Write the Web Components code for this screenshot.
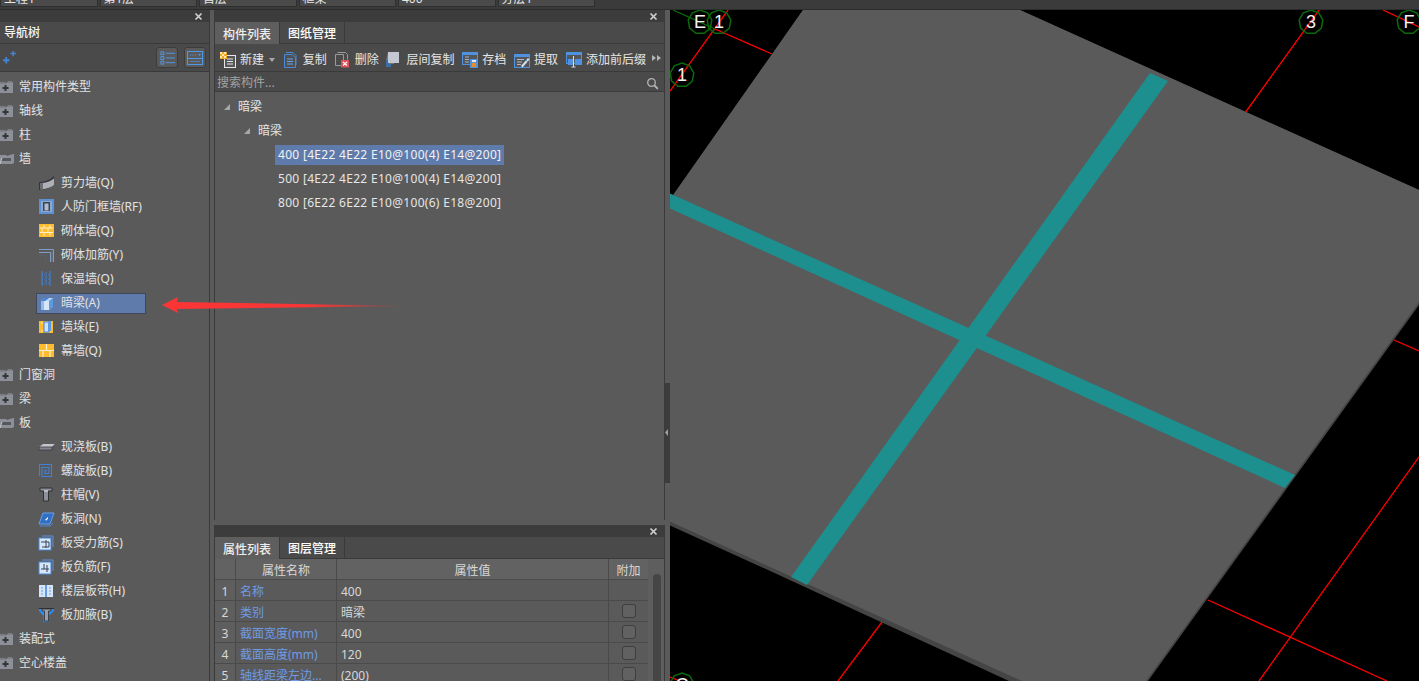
<!DOCTYPE html>
<html lang="zh">
<head>
<meta charset="utf-8">
<title>导航树</title>
<style>
    html, body { margin: 0; height: 100%; overflow: hidden; background: #3c3c3c; }
    body {
        font: 12px/16px "Noto Sans", "Noto Sans CJK SC", sans-serif;
        color: #e2e2e2;
    }
</style>
</head>
<body>
<app-shell>
    <top-strip slot="top">
        <strip-field>工程1</strip-field>
        <strip-field>第1层</strip-field>
        <strip-field>首层</strip-field>
        <strip-field>框架</strip-field>
        <strip-field>400</strip-field>
        <strip-field>分层1</strip-field>
    </top-strip>

    <dock-panel slot="nav">
        <nav-header>导航树</nav-header>
        <nav-tools></nav-tools>
        <nav-tree>
            <tree-node icon="folderPlus">常用构件类型</tree-node>
            <tree-node icon="folderPlus">轴线</tree-node>
            <tree-node icon="folderPlus">柱</tree-node>
            <tree-node icon="folderOpen">墙</tree-node>
            <tree-node child icon="shear">剪力墙(Q)</tree-node>
            <tree-node child icon="frame">人防门框墙(RF)</tree-node>
            <tree-node child icon="brick">砌体墙(Q)</tree-node>
            <tree-node child icon="brickBar">砌体加筋(Y)</tree-node>
            <tree-node child icon="insul">保温墙(Q)</tree-node>
            <tree-node child selected icon="beam">暗梁(A)</tree-node>
            <tree-node child icon="pier">墙垛(E)</tree-node>
            <tree-node child icon="curtain">幕墙(Q)</tree-node>
            <tree-node icon="folderPlus">门窗洞</tree-node>
            <tree-node icon="folderPlus">梁</tree-node>
            <tree-node icon="folderOpen">板</tree-node>
            <tree-node child icon="slab">现浇板(B)</tree-node>
            <tree-node child icon="spiral">螺旋板(B)</tree-node>
            <tree-node child icon="cap">柱帽(V)</tree-node>
            <tree-node child icon="hole">板洞(N)</tree-node>
            <tree-node child icon="rebarA">板受力筋(S)</tree-node>
            <tree-node child icon="rebarB">板负筋(F)</tree-node>
            <tree-node child icon="strip">楼层板带(H)</tree-node>
            <tree-node child icon="haunch">板加腋(B)</tree-node>
            <tree-node icon="folderPlus">装配式</tree-node>
            <tree-node icon="folderPlus">空心楼盖</tree-node>
        </nav-tree>
    </dock-panel>

    <dock-panel slot="list">
        <panel-tabs>
            <panel-tab active>构件列表</panel-tab>
            <panel-tab>图纸管理</panel-tab>
        </panel-tabs>
        <comp-toolbar>
            <tool-button icon="new" caret>新建</tool-button>
            <tool-button icon="copy">复制</tool-button>
            <tool-button icon="del">删除</tool-button>
            <tool-button icon="floorCopy">层间复制</tool-button>
            <tool-button icon="save">存档</tool-button>
            <tool-button icon="pick">提取</tool-button>
            <tool-button icon="affix">添加前后缀</tool-button>
        </comp-toolbar>
        <search-row>搜索构件...</search-row>
        <comp-tree>
            <comp-node level="0">暗梁</comp-node>
            <comp-node level="1">暗梁</comp-node>
            <comp-node level="2" selected>400 [4E22 4E22 E10@100(4) E14@200]</comp-node>
            <comp-node level="2">500 [4E22 4E22 E10@100(4) E14@200]</comp-node>
            <comp-node level="2">800 [6E22 6E22 E10@100(6) E18@200]</comp-node>
        </comp-tree>
    </dock-panel>

    <dock-panel slot="props">
        <panel-tabs>
            <panel-tab active>属性列表</panel-tab>
            <panel-tab>图层管理</panel-tab>
        </panel-tabs>
        <prop-table>
            <prop-row n="1" name="名称" value="400" nocheck></prop-row>
            <prop-row n="2" name="类别" value="暗梁"></prop-row>
            <prop-row n="3" name="截面宽度(mm)" value="400"></prop-row>
            <prop-row n="4" name="截面高度(mm)" value="120"></prop-row>
            <prop-row n="5" name="轴线距梁左边..." value="(200)"></prop-row>
        </prop-table>
    </dock-panel>

    <split-handle slot="split"></split-handle>
    <cad-view slot="cad"></cad-view>
    <red-arrow slot="over"></red-arrow>
</app-shell>

<script>
const ICONS = {
    folderPlus: '<path d="M0 3h5l1 1h1l1-2h4v1h1v11H0z" fill="#8d9099"/><path d="M0 4h6M8 3h4" stroke="#6c6e75"/><path d="M2.500 8h2V6h2v2h2v2h-2v2h-2v-2h-2z" fill="#33353a"/>',
    folderOpen: '<path d="M0 4h6l1 1 6-2h1v9l-2 1H0z" fill="#8d9099"/><path d="M2 7h9v3H1z" fill="#55575c"/><path d="M0 13l2-6" stroke="#c2c4c8"/>',
    shear: '<path d="M0 7c6 0 11-2 15-6v9c-4 3-9 5-15 5z" fill="#33353a"/><path d="M2 8c5 0 10-2 13-4.500V10c-3 2.500-8 4-13 4.500z" fill="#aeb0b6"/><path d="M1 14.500V8h3v6z" fill="#6c6e75"/>',
    frame: '<rect x="0" y="0" width="15" height="15" fill="#5d91d6"/><rect x="2" y="2" width="11" height="11" fill="#8ea8cc"/><rect x="4" y="3" width="7" height="9" fill="#3d4650"/><rect x="5.500" y="4.500" width="4" height="7" fill="#aebbd0"/>',
    brick: '<rect x="0" y="1" width="15" height="13" fill="#fdbb2d"/><path d="M1 5h13M1 9.500h13M5 2v3M11 2v3M3 5v4.500M9 5v4.500M5 9.500V13M11 9.500V13" stroke="#fff0c8"/>',
    brickBar: '<path d="M0 2.500h14.500V15M0 5.500h11.500V15" fill="none" stroke="#7f9dc6"/><path d="M0 8.500h6.500V13" fill="none" stroke="#56606e"/><path d="M13 4v11" stroke="#6c7a8d"/>',
    insul: '<path d="M3 0v15M11 0v15" stroke="#3f80d8" stroke-width="1.200"/><path d="M7 1v13" stroke="#3f80d8" stroke-dasharray="2 2"/><path d="M3 4h8M3 8h8M3 12h8" stroke="#3f80d8" stroke-dasharray="1 1"/>',
    beam: '<path d="M2 6l4-3h8v8l-4 4H2z" fill="#b8d4f2"/><path d="M2 6h8v9H2z" fill="#d6e6f8"/><path d="M10 6l4-3v8l-4 4z" fill="#5b9ae0"/><path d="M2 6l4-3h4L6 6z" fill="#3f80d8"/><path d="M2 6h3v9H2z" fill="#8fbcec"/>',
    pier: '<rect x="0" y="2" width="14" height="12" fill="#fdbb2d"/><path d="M2 4h10M2 12h10" stroke="#fff0c8" stroke-dasharray="2 1"/><rect x="5" y="3" width="5" height="10" fill="#cfe1f6" stroke="#3f80d8"/><rect x="9" y="2" width="3" height="10" fill="#5b9ae0"/>',
    curtain: '<rect x="0" y="1" width="15" height="13" fill="#fdbb2d"/><path d="M7.500 1v6.500M0 7.500h15M4 7.500V14M11 7.500V14" stroke="#fff0c8" stroke-width="1.200"/>',
    slab: '<path d="M0 8l4-3h12l-3 3z" fill="#c4c6cb"/><path d="M0 8h13v3H0z" fill="#85878e"/><path d="M13 8l3-3v3l-3 3z" fill="#55575c"/><path d="M0 8h13v3H0z" fill="none" stroke="#3a3b40" stroke-width=".8"/>',
    spiral: '<path d="M.5 13V1.500h12v12H3V4.500h7v6H6V7.500h2" fill="none" stroke="#3f80d8" stroke-width="1.100"/>',
    cap: '<path d="M1 1h12v3H9.500v10H4.500V4H1z" fill="#8d9099" stroke="#2f3034"/><path d="M5 4h4" stroke="#e5e5e5"/>',
    hole: '<path d="M4 2h11l-4 11H0z" fill="#2f6fc6" stroke="#6aa0e4"/><path d="M6 9l3-3v1.500L7.500 9.500z" fill="#fff"/><path d="M1 15h10l3-3" fill="none" stroke="#4a88d8"/>',
    rebarA: '<path d="M3 1h11v11" fill="none" stroke="#5b92d8"/><rect x="0" y="3" width="12" height="12" fill="#d8e6f7" stroke="#4a88d8"/><path d="M2 7h8v5H3M7 5v8" fill="none" stroke="#33435a"/>',
    rebarB: '<path d="M3 1h11v11" fill="none" stroke="#5b92d8"/><rect x="0" y="3" width="12" height="12" fill="#d8e6f7" stroke="#4a88d8"/><path d="M5 5v5H2M8 6v7M5 10h5" fill="none" stroke="#33435a"/>',
    strip: '<rect x="0" y="2" width="14" height="12" fill="#d6e6f8"/><path d="M7 2v12" stroke="#3f80d8" stroke-width="1.500"/><path d="M3 4v8M11 4v8" stroke="#6f9ed8" stroke-dasharray="2 1"/>',
    haunch: '<path d="M0 1h15v1H0z" fill="#2f3034"/><path d="M0 2h15v2L9.500 9V15h-5V9L0 4z" fill="#2e8df0"/><path d="M3 2h9v2H9.500v10h-4V4H3z" fill="#9a9da5" stroke="#2f3034" stroke-width=".8"/>',
    new: '<rect x="4.500" y="3.500" width="11" height="12" fill="#55565a" stroke="#e6e6e6"/><path d="M7 7h6M7 9.500h6M7 12h6" stroke="#e6e6e6"/><rect x="0" y="0" width="7" height="7" fill="#f5a623"/><path d="M0 0h2v2H0zM4 0h2v2H4zM2 2h2v2H2zM0 4h2v2H0zM4 4h2v2H4z" fill="#fde7b8"/>',
    copy: '<path d="M3 .5h7l3 3V13" fill="none" stroke="#4a88d8"/><path d="M1.500 2.500h8l3 3v10h-11z" fill="#4f5052" stroke="#4a88d8"/><path d="M4 7h6M4 9.500h6M4 12h6" stroke="#6ba3e8"/>',
    del: '<path d="M2.500 .5h8l2 2v5" fill="none" stroke="#9a9a9a"/><path d="M.5 2.500h8v11h-8z" fill="none" stroke="#9a9a9a"/><rect x="6" y="8" width="8" height="7.500" fill="#e0525a"/><path d="M8 10l4 3.500M12 10l-4 3.500" stroke="#fff" stroke-width="1.100"/>',
    floorCopy: '<path d="M0 8h5v7H0z" fill="#3a6ea8"/><rect x="2" y="0" width="11" height="11" fill="#c4c8d2"/><path d="M2 0l-2 8h2z" fill="#74787f"/><rect x="3" y="11" width="5" height="1" fill="#777"/>',
    save: '<rect x=".5" y=".5" width="15" height="12" fill="#55565a" stroke="#4f93e0"/><rect x="0" y="0" width="16" height="3" fill="#4f93e0"/><path d="M3 5h4M3 7.500h4M3 10h4" stroke="#9fb4cf"/><rect x="8" y="7" width="8" height="9" fill="#4f93e0"/><rect x="10" y="11" width="4" height="4" fill="#f28b1e"/><rect x="10" y="8" width="4" height="2" fill="#dfe9f5"/>',
    pick: '<rect x=".5" y="2.500" width="15" height="13" fill="#55565a" stroke="#4f93e0"/><rect x="0" y="2" width="16" height="3" fill="#4f93e0"/><path d="M3 7.500h7M3 10h5M3 12.500h4" stroke="#b6b8bc"/><path d="M7 14l7-8 1.500 1.500-7 8z" fill="#d8e2ec"/><path d="M12 8l2 2" stroke="#33a8c9"/>',
    affix: '<rect x=".5" y=".5" width="15" height="11" fill="#55565a" stroke="#4f93e0"/><rect x="0" y="0" width="16" height="3" fill="#4f93e0"/><rect x="2" y="7" width="5" height="6" fill="#4f93e0"/><rect x="9" y="7" width="7" height="6" fill="#4f93e0"/><path d="M7.500 4v11M5.500 15h4" stroke="#cfe0f4"/>',
    sparkle: '<path d="M8 2h2.200v-2h1.600v2H14v1.600h-2.200v2h-1.600v-2H8zM0 9h2.500V6.500h2V9H7v2H4.500v2.500h-2V11H0z" fill="#3f86da"/>',
    listView: '<rect x="1" y="2" width="3" height="3" fill="none" stroke="#4f9ae8"/><rect x="1" y="7" width="3" height="3" fill="none" stroke="#4f9ae8"/><rect x="1" y="12" width="3" height="3" fill="none" stroke="#4f9ae8"/><path d="M6 3.500h10M6 8.500h10M6 13.500h10" stroke="#4f9ae8"/>',
    panelView: '<rect x=".5" y="1.500" width="15" height="13" fill="none" stroke="#4f9ae8"/><path d="M1 8.500h14" stroke="#4f9ae8"/><path d="M3 5h1M5.500 5h1M8 5h1" stroke="#4f9ae8"/><path d="M11 4h3l-1.500 2z" fill="#4f9ae8"/><path d="M3 11.500h10" stroke="#4f9ae8" opacity=".6"/>',
    close: '<path d="M1.500 1.500l6 6M7.500 1.500l-6 6" stroke="#d0d0d0" stroke-width="1.700"/>',
    search: '<circle cx="5.500" cy="5.500" r="3.800" fill="none" stroke="#b4b4b4" stroke-width="1.300"/><path d="M8.500 8.500l3.300 3.300" stroke="#b4b4b4" stroke-width="1.800"/>',
};

function svgIcon(name, size = 16, box = 16) {
    return `<svg xmlns="http://www.w3.org/2000/svg" width="${size}" height="${size}" viewBox="0 0 ${box} ${box}" style="display:block;flex:none;overflow:visible">${ICONS[name]}</svg>`;
}

// small helper so each class below stays short
function define(tag, html, init) {
    const tpl = document.createElement('template');
    tpl.innerHTML = html;
    customElements.define(tag, class extends HTMLElement {
        constructor() {
            super();
            this.attachShadow({ mode: 'open' });
            this.shadowRoot.appendChild(tpl.content.cloneNode(true));
        }
        connectedCallback() {
            if (init) init(this, this.shadowRoot);
        }
    });
}

define('app-shell', /*html*/`
    <style>
        :host {
            display: grid;
            position: relative;
            height: 100vh;
            overflow: hidden;
            grid-template-columns: 210px 4px 451px 5px 1fr;
            grid-template-rows: 10px 510px 5px 156px;
            background: #5a5a5a;
        }
        .top { grid-column: 1 / -1; grid-row: 1; }
        .nav { grid-column: 1; grid-row: 2 / 5; }
        .list { grid-column: 3; grid-row: 2; }
        .props { grid-column: 3; grid-row: 4; }
        .split { grid-column: 4; grid-row: 2 / 5; }
        .cad { grid-column: 5; grid-row: 2 / 5; }
        .cell { display: block; min-width: 0; min-height: 0; overflow: hidden; }
        .cell ::slotted(*) { height: 100%; }
    </style>
    <div class="cell top"><slot name="top"></slot></div>
    <div class="cell nav"><slot name="nav"></slot></div>
    <div class="cell list"><slot name="list"></slot></div>
    <div class="cell props"><slot name="props"></slot></div>
    <div class="cell split"><slot name="split"></slot></div>
    <div class="cell cad"><slot name="cad"></slot></div>
    <slot name="over"></slot>
`);

define('top-strip', /*html*/`
    <style>
        :host { display: flex; gap: 2px; background: #3b3b3b; border-bottom: 1px solid #2c2c2c; box-sizing: border-box; height: 10px; overflow: hidden; }
    </style>
    <slot></slot>
`);

define('strip-field', /*html*/`
    <style>
        :host { display: block; width: 97.5px; height: 7px; background: #4a4a4a; border: 1px solid #2f2f2f; border-top: 0; box-sizing: border-box; overflow: hidden; }
        div { margin: -9px 0 0 3px; line-height: 16px; color: #e6e6e6; white-space: nowrap; }
    </style>
    <div><slot></slot></div>
`);

define('dock-panel', /*html*/`
    <style>
        :host { display: flex; flex-direction: column; box-sizing: border-box; border-right: 1px solid #3a3a3a; background: #5a5a5a; overflow: hidden; }
        .title { flex: none; height: 12px; background: #3c3c3c; display: flex; justify-content: flex-end; align-items: center; padding-right: 6px; }
        .body { flex: 1; min-height: 0; display: flex; flex-direction: column; }
    </style>
    <div class="title" id="close"></div>
    <div class="body"><slot></slot></div>
`, (el, root) => {
    root.getElementById('close').innerHTML = svgIcon('close', 9, 9);
    if (el.getAttribute('slot') !== 'nav') el.style.borderLeft = '1px solid #3a3a3a';
});

define('nav-header', /*html*/`
    <style>
        :host { display: flex; align-items: center; flex: none; height: 22px; padding: 1px 0 0 4px; box-sizing: border-box; background: #4a4a4a; border-bottom: 1px solid #3a3a3a; color: #f4f4f4; font-weight: 500; }
    </style>
    <slot></slot>
`);

define('nav-tools', /*html*/`
    <style>
        :host { display: flex; align-items: center; flex: none; height: 27px; padding: 0 3px 0 3px; background: #4a4a4a; border-bottom: 1px solid #3a3a3a; }
        i { flex: 1; }
        b { display: flex; align-items: center; justify-content: center; width: 22px; height: 21px; margin-left: 6px; background: #5a5a5a; border: 1px solid #3c3c3c; border-radius: 3px; box-sizing: border-box; }
        span { display: block; }
    </style>
    <span id="s"></span><i></i><b id="a"></b><b id="b"></b>
`, (el, root) => {
    root.getElementById('s').innerHTML = svgIcon('sparkle', 13, 14);
    root.getElementById('a').innerHTML = svgIcon('listView', 15, 16);
    root.getElementById('b').innerHTML = svgIcon('panelView', 16, 16);
});

define('nav-tree', /*html*/`
    <style>
        :host { display: block; flex: 1; min-height: 0; padding-top: 3px; overflow: hidden; }
    </style>
    <slot></slot>
`);

define('tree-node', /*html*/`
    <style>
        :host { display: flex; align-items: center; height: 24px; white-space: nowrap; }
        .box { display: flex; align-items: center; gap: 3px; box-sizing: border-box; height: 21px; }
        :host([child]) .box { margin-left: 36px; width: 110px; padding-left: 3px; gap: 6px; }
        :host([selected]) .box { background: #5f7bab; outline: 1px solid #41475a; outline-offset: -1px; }
    </style>
    <div class="box"><span id="i"></span><slot></slot></div>
`, (el, root) => {
    root.getElementById('i').innerHTML = svgIcon(el.getAttribute('icon'));
});

define('panel-tabs', /*html*/`
    <style>
        :host { display: flex; flex: none; height: 22px; background: #4a4a4a; border-bottom: 1px solid #3a3a3a; box-sizing: border-box; }
    </style>
    <slot></slot>
`);

define('panel-tab', /*html*/`
    <style>
        :host { display: flex; align-items: center; justify-content: center; width: 65px; padding-top: 3px; box-sizing: border-box; border-right: 1px solid #3a3a3a; color: #fff; font-weight: 500; }
        :host([active]) { background: #5e5e5e; color: #eee; margin-bottom: -1px; }
    </style>
    <slot></slot>
`);

define('comp-toolbar', /*html*/`
    <style>
        :host { display: flex; align-items: center; flex: none; height: 28px; padding: 5px 0 0 5px; gap: 7.8px; background: #4a4a4a; border-bottom: 1px solid #3a3a3a; box-sizing: border-box; white-space: nowrap; position: relative; }
        u { position: absolute; top: 11px; width: 0; height: 0; border: 3.5px solid transparent; border-left: 4px solid #b4b4b4; border-right: 0; }
        .a { right: 8px; }
        .b { right: 3px; }
    </style>
    <slot></slot><u class="a"></u><u class="b"></u>
`);

define('tool-button', /*html*/`
    <style>
        :host { display: flex; align-items: center; gap: 4px; color: #e6e6e6; }
        u { width: 0; height: 0; margin: 0 0 0 1px; border: 3px solid transparent; border-top: 4px solid #aaa; border-bottom: 0; display: none; }
        :host([caret]) u { display: block; }
    </style>
    <span id="i"></span><slot></slot><u></u>
`, (el, root) => {
    root.getElementById('i').innerHTML = svgIcon(el.getAttribute('icon'));
});

define('search-row', /*html*/`
    <style>
        :host { display: flex; align-items: center; justify-content: space-between; flex: none; height: 20px; padding: 2px 6px 0 2px; background: #4a4a4a; border-bottom: 1px solid #3a3a3a; box-sizing: border-box; color: #a2a2a2; }
    </style>
    <slot></slot><span id="i"></span>
`, (el, root) => {
    root.getElementById('i').innerHTML = svgIcon('search', 12, 12);
});

define('comp-tree', /*html*/`
    <style>
        :host { display: block; flex: 1; padding-top: 3px; }
    </style>
    <slot></slot>
`);

define('comp-node', /*html*/`
    <style>
        :host { display: flex; align-items: center; height: 24px; white-space: nowrap; color: #e6e6e6; }
        :host([level="0"]) { padding-left: 9px; }
        :host([level="1"]) { padding-left: 29px; }
        :host([level="2"]) { padding-left: 60px; letter-spacing: .3px; }
        u { width: 6px; height: 6px; margin-right: 5px; background: #a6a6a6; clip-path: polygon(100% 0, 100% 100%, 0 100%); }
        :host([level="2"]) u { display: none; }
        div { padding: 0 3px; line-height: 20px; }
        :host([selected]) div { background: #5f7bab; color: #f2f2f2; }
    </style>
    <u></u><div><slot></slot></div>
`);

define('prop-table', /*html*/`
    <style>
        :host { display: block; flex: 1; position: relative; overflow: hidden; background: #5a5a5a; }
        .head { display: grid; grid-template-columns: 21px 101px 272px 40px; height: 21px; background: #626262; border-bottom: 1px solid #4a4a4a; box-sizing: border-box; color: #d8d8d8; }
        .head div { display: flex; align-items: center; justify-content: center; padding-top: 4px; box-sizing: border-box; border-right: 1px solid #4a4a4a; }
        .bar { position: absolute; right: 0; top: 0; bottom: 0; width: 16px; background: #5e5e5e; }
        .bar i { position: absolute; left: 5px; top: 15px; bottom: -20px; width: 8px; border-radius: 4px; background: #454545; }
    </style>
    <div class="head"><div></div><div>属性名称</div><div>属性值</div><div>附加</div></div>
    <slot></slot>
    <div class="bar"><i></i></div>
`);

define('prop-row', /*html*/`
    <style>
        :host { display: grid; grid-template-columns: 21px 101px 272px 40px; height: 21px; box-sizing: border-box; border-bottom: 1px solid #4a4a4a; color: #d8d8d8; }
        div { display: flex; align-items: center; box-sizing: border-box; border-right: 1px solid #4a4a4a; white-space: nowrap; overflow: hidden; }
        .n { justify-content: center; padding-top: 4px; background: #5e5e5e; }
        .name { padding: 4px 0 0 4px; color: #6f9be6; }
        .val { padding: 4px 0 0 4px; }
        .chk { justify-content: center; }
        .chk i { width: 14px; height: 14px; box-sizing: border-box; border: 1px solid #3e3e3e; border-radius: 3px; background: #616161; }
        :host([nocheck]) .chk i { display: none; }
    </style>
    <div class="n" id="n"></div><div class="name" id="name"></div><div class="val" id="val"></div><div class="chk"><i></i></div>
`, (el, root) => {
    root.getElementById('n').textContent = el.getAttribute('n');
    root.getElementById('name').textContent = el.getAttribute('name');
    root.getElementById('val').textContent = el.getAttribute('value');
});

define('split-handle', /*html*/`
    <style>
        :host { display: block; position: relative; background: #5a5a5a; }
        i { position: absolute; left: 0; right: 0; top: 373px; height: 100px; background: #3c3c3c; }
        b { position: absolute; left: 0; top: 419px; width: 3px; height: 7px; background: #a0a0a0; clip-path: polygon(100% 0, 100% 100%, 0 50%); }
    </style>
    <i></i><b></b>
`);

// the drawing area is a free canvas, coordinates are screen pixels
define('cad-view', /*html*/`
    <style>
        :host { display: block; background: #000; overflow: hidden; }
        svg { display: block; }
        text { font: 18px "Liberation Sans", sans-serif; fill: #f2f2f2; text-anchor: middle; }
    </style>
    <svg xmlns="http://www.w3.org/2000/svg" width="749" height="671" viewBox="670 10 749 671">
        <g stroke="#f00" stroke-width="1.300" fill="none">
            <path d="M670 91L728 10M715 29L772 54"/>
            <path d="M1319 10L1245 113M1383 10L1419 27"/>
            <path d="M1394 340L1419 351"/>
            <path d="M1208 600L1387 681M1419 457L1259 681"/>
            <path d="M882 622L838 681"/>
            <path d="M670 677L680 681"/>
        </g>
        <path d="M673 10L715 29" stroke="#0a6b0a" stroke-width="1.300"/>
        <polygon points="803,10 1020,10 1419,190 1419,305 1148,681 1009,681 768,570 669,525 669,201" fill="#454545"/>
        <polygon points="803,10 1020,10 1419,190 1419,302 1146,681 1022,681 768,566 669,521 669,201" fill="#5a5a5a"/>
        <polygon points="669,193 1295,475 1285,488 669,208" fill="#1d8f8f"/>
        <polygon points="1150,73 1168,81 807,585 791,577" fill="#1d8f8f"/>
        <g id="bubbles" fill="none" stroke="#0b6a0b" stroke-width="1.500"></g>
        <g id="labels"></g>
    </svg>
`, (el, root) => {
    const pts = (cx, cy) => {
        let out = [];
        for (let i = 0; i < 9; i++) {
            const a = Math.PI * 2 * i / 9 - Math.PI / 2;
            out.push((cx + 12 * Math.cos(a)).toFixed(1) + ',' + (cy + 12 * Math.sin(a)).toFixed(1));
        }
        return out.join(' ');
    };
    const list = [['E', 700, 22], ['1', 719, 22], ['1', 682, 75], ['3', 1311, 22], ['F', 1409, 22], ['C', 682, 685]];
    const ns = 'http://www.w3.org/2000/svg';
    list.forEach(([t, x, y]) => {
        const p = document.createElementNS(ns, 'polygon');
        p.setAttribute('points', pts(x, y));
        root.getElementById('bubbles').appendChild(p);
        const l = document.createElementNS(ns, 'text');
        l.setAttribute('x', x);
        l.setAttribute('y', y + 6);
        l.textContent = t;
        root.getElementById('labels').appendChild(l);
    });
});

define('red-arrow', /*html*/`
    <style>
        :host { position: absolute; left: 155px; top: 290px; display: block; height: 30px !important; pointer-events: none; }
        svg { display: block; }
    </style>
    <svg xmlns="http://www.w3.org/2000/svg" width="260" height="30" viewBox="155 290 260 30">
        <defs>
            <linearGradient id="g" x1="162" y1="0" x2="407" y2="0" gradientUnits="userSpaceOnUse">
                <stop offset="0" stop-color="#f93535"/>
                <stop offset=".6" stop-color="#f93535"/>
                <stop offset="1" stop-color="#f93535" stop-opacity=".15"/>
            </linearGradient>
        </defs>
        <polygon points="162,305 178,297 177,302 407,306 177,309 178,313" fill="url(#g)"/>
    </svg>
`);
</script>
</body>
</html>
